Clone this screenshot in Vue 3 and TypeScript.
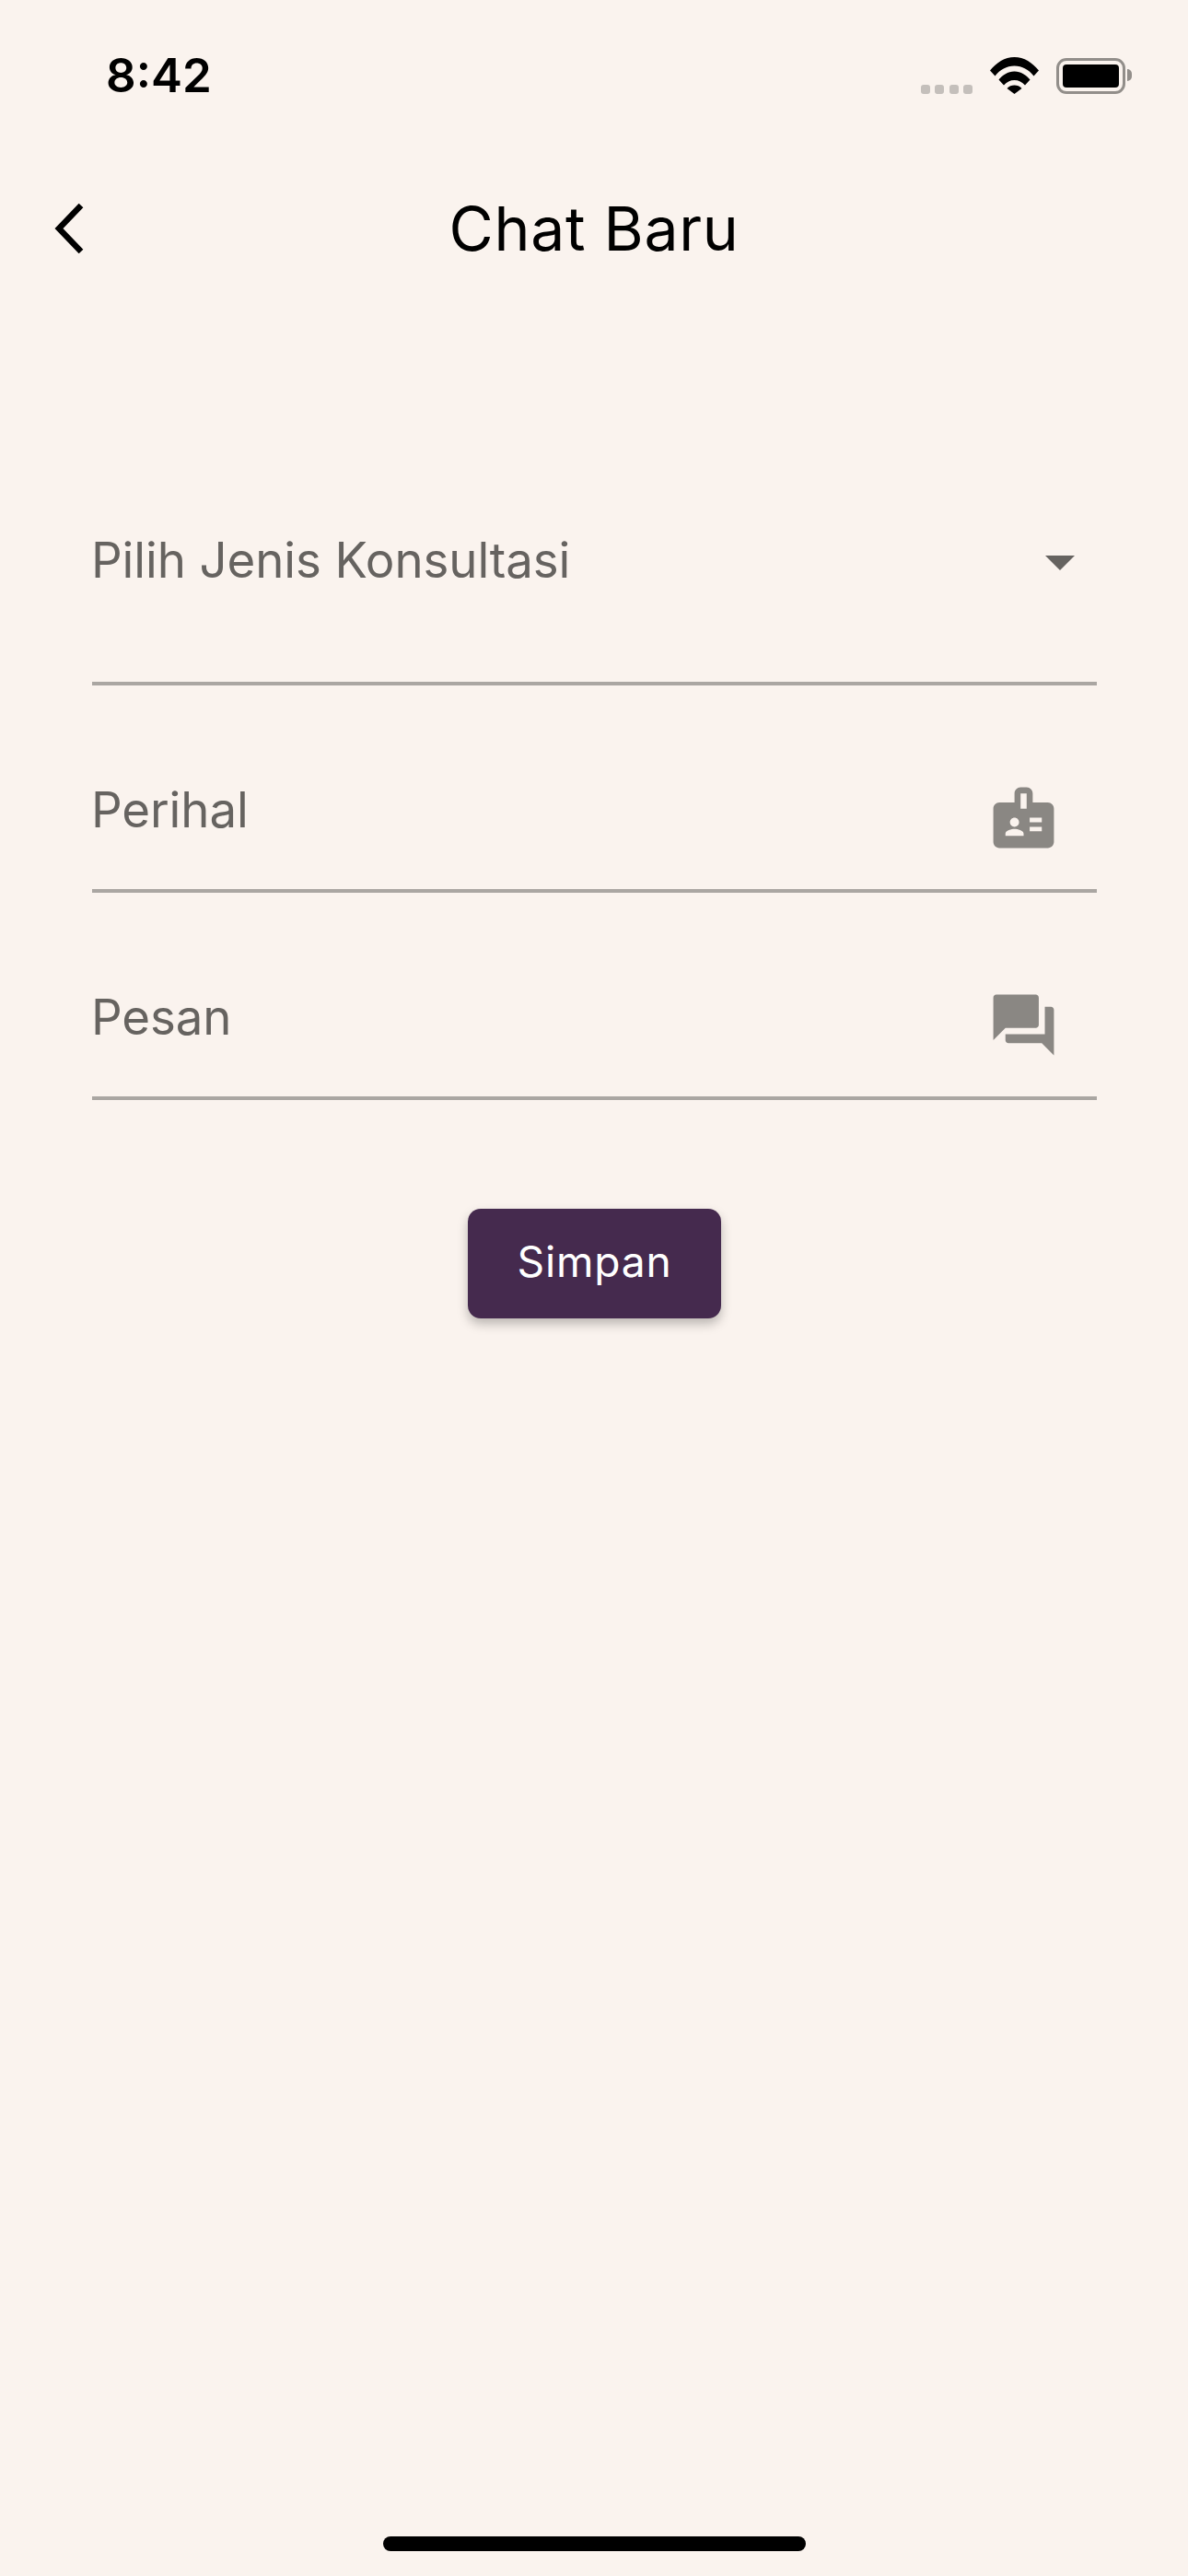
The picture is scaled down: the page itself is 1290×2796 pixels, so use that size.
<script setup lang="ts">
const fields = [
  { label: "Perihal", icon: "badge" },
  { label: "Pesan", icon: "chat" },
];
const icons: Record<string, string> = {
  badge:
    "M20 7h-5V4c0-1.1-.9-2-2-2h-2c-1.1 0-2 .9-2 2v3H4c-1.1 0-2 .9-2 2v11c0 1.1.9 2 2 2h16c1.1 0 2-.9 2-2V9c0-1.1-.9-2-2-2zM9 12c.83 0 1.5.67 1.5 1.5S9.83 15 9 15s-1.5-.67-1.5-1.5S8.17 12 9 12zm3 6H6v-.75c0-1 2-1.5 3-1.5s3 .5 3 1.5V18zm1-9h-2V4h2v5zm5 7.5h-4V15h4v1.5zm0-3h-4V12h4v1.5z",
  chat: "M21 6h-2v9H6v2c0 .55.45 1 1 1h11l4 4V7c0-.55-.45-1-1-1zm-4 6V3c0-.55-.45-1-1-1H3c-.55 0-1 .45-1 1v14l4-4h10c.55 0 1-.45 1-1z",
};
</script>

<template>
  <div class="screen">
    <div class="status">
      <span class="time">8:42</span>
      <div class="indicators">
        <div class="dots">
          <i></i>
          <i></i>
          <i></i>
          <i></i>
        </div>
        <svg class="wifi" viewBox="0 0 53 40" width="53" height="40">
          <path d="M0 14.5C7 6 16 0 26.5 0S46 6 53 14.5l-5.5 6C42 13.500 35 9.500 26.500 9.500S11 13.500 5.500 20.500z" />
          <path d="M9.500 24.500C13.500 19.500 19.500 15.500 26.500 15.500s13 4 17 9l-5.500 6c-3-3.500-7-5.500-11.500-5.500s-8.500 2-11.500 5.500z" />
          <path d="M18.500 34c2-2.500 5-3.500 8-3.500s6 1 8 3.500l-8 6z" />
        </svg>
        <div class="battery"><div class="level"></div></div>
      </div>
    </div>

    <header class="appbar">
      <button class="back">
        <svg viewBox="0 0 32 54" width="32" height="54">
          <path d="M29 2 L5 27 L29 52" fill="none" stroke="#000" stroke-width="6.500" />
        </svg>
      </button>
      <h1>Chat Baru</h1>
      <span></span>
    </header>

    <form class="form" @submit.prevent>
      <div class="field select">
        <span class="label">Pilih Jenis Konsultasi</span>
        <span class="caret"></span>
      </div>
      <div v-for="f in fields" :key="f.label" class="field">
        <span class="label">{{ f.label }}</span>
        <svg class="icon" viewBox="0 0 24 24" width="79" height="79">
          <path :d="icons[f.icon]" />
        </svg>
      </div>
      <button class="save" type="submit">Simpan</button>
    </form>

    <div class="home"><div class="bar"></div></div>
  </div>
</template>

<style>
body {
  background: #faf3ee;
}
</style>

<style scoped>
.screen {
  width: 1290px;
  height: 2796px;
  display: flex;
  flex-direction: column;
  overflow: hidden;
  background: #faf3ee;
  font-family: Inter, "Liberation Sans", sans-serif;
  color: #000;
}

.status {
  height: 163px;
  display: flex;
  align-items: center;
  justify-content: space-between;
  padding: 0 68px 0 115px;
  box-sizing: border-box;
}

.time {
  font-size: 51px;
  font-weight: 600;
  line-height: 1;
}

.indicators {
  display: flex;
  align-items: flex-end;
  height: 40px;
}

.dots {
  display: flex;
  gap: 5.5px;
  margin-right: 19px;
}

.dots i {
  width: 10px;
  height: 10px;
  border-radius: 3px;
  background: #c4bfbb;
}

.wifi {
  display: block;
  margin-right: 19px;
}

.battery {
  position: relative;
  width: 75px;
  height: 39px;
  box-sizing: border-box;
  padding: 4px;
  border: 3px solid #928e8a;
  border-radius: 11px;
}

.battery::after {
  content: "";
  position: absolute;
  right: -10px;
  top: 9px;
  width: 5px;
  height: 13px;
  border-radius: 0 6px 6px 0;
  background: #928e8a;
}

.level {
  height: 100%;
  border-radius: 4px;
  background: #000;
}

.appbar {
  height: 170px;
  display: grid;
  grid-template-columns: 1fr auto 1fr;
  align-items: center;
}

.appbar h1 {
  margin: 0;
  font-size: 66px;
  font-weight: 400;
  line-height: 1;
  letter-spacing: 0.7px;
}

.back {
  justify-self: start;
  display: flex;
  margin-left: 59px;
  padding: 0;
  border: 0;
  background: none;
}

.form {
  display: flex;
  flex-direction: column;
  padding: 0 99px 0 100px;
  margin-top: 185px;
}

.field {
  height: 126px;
  margin-top: 99px;
  display: flex;
  justify-content: space-between;
  box-sizing: border-box;
  padding-right: 40px;
  border-bottom: 4px solid #aaa6a2;
}

.field.select {
  height: 226px;
  margin-top: 0;
  padding-right: 24px;
  align-items: flex-start;
}

.label {
  margin-top: 4px;
  margin-left: -1px;
  font-size: 52.800px;
  line-height: 64px;
  letter-spacing: -0.1px;
  color: #666360;
}

.select .label {
  margin-top: 58px;
}

.caret {
  margin-top: 85px;
  width: 0;
  height: 0;
  border-left: 16px solid transparent;
  border-right: 16px solid transparent;
  border-top: 16px solid #666360;
}

.icon {
  display: block;
  margin-top: 5px;
  fill: #8a8783;
}

.save {
  align-self: center;
  width: 275px;
  height: 119px;
  margin-top: 118px;
  padding: 0 0 6px;
  border: 0;
  border-radius: 14px;
  background: #452a4e;
  color: #fff;
  font-family: inherit;
  font-size: 46.200px;
  letter-spacing: 0.8px;
  box-shadow: 0 6px 12px rgba(0, 0, 0, 0.25);
}

.home {
  margin-top: auto;
  height: 43px;
  display: flex;
  justify-content: center;
}

.bar {
  width: 459px;
  height: 16px;
  border-radius: 8px;
  background: #000;
}
</style>
